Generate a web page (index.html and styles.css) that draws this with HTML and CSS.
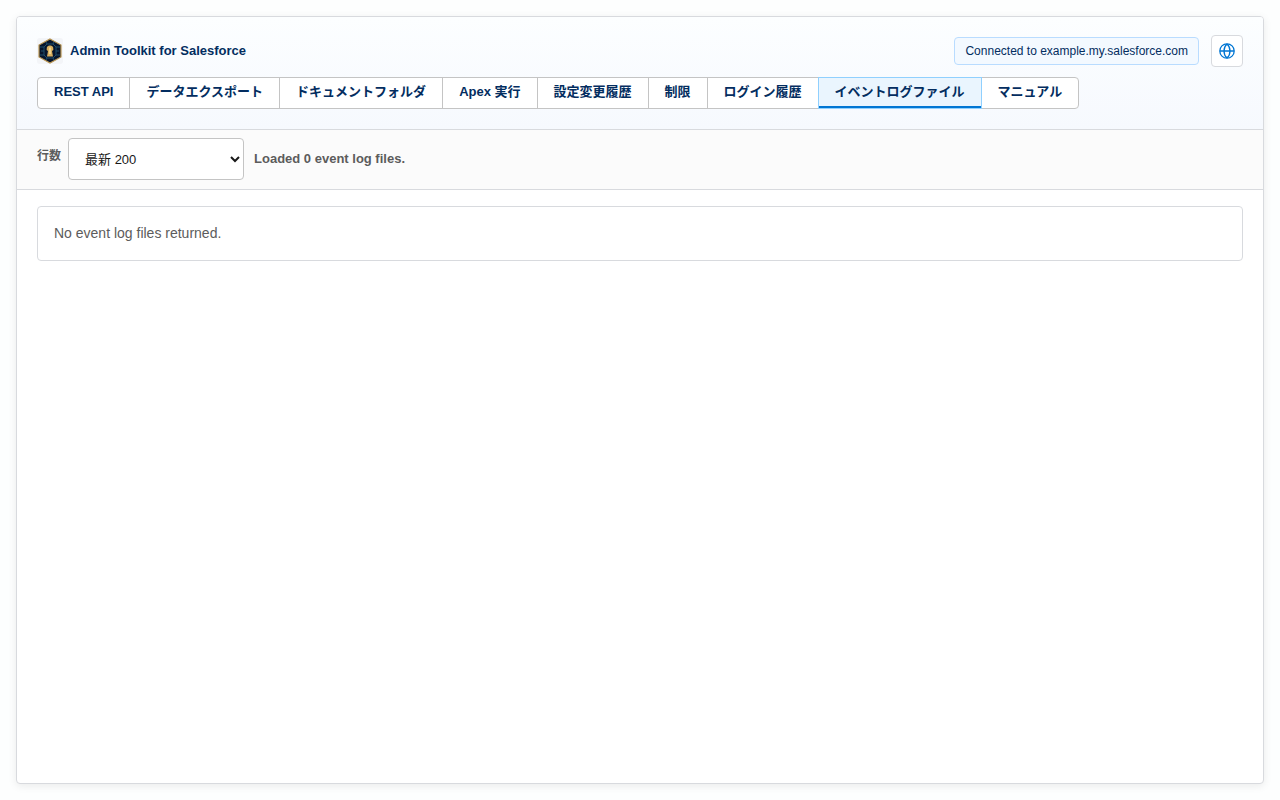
FILE: index.html
```html
<!DOCTYPE html>
<html lang="ja">
<head>
  <meta charset="UTF-8">
  <meta name="viewport" content="width=device-width, initial-scale=1.0">
  <title>Admin Toolkit for Salesforce</title>
  <link rel="stylesheet" href="styles.css">
</head>
<body>
  <div class="app">
    <!-- Header -->
    <header class="header">
      <div class="header-top">
        <div class="brand">
          <svg class="logo" viewBox="0 0 26 26" aria-hidden="true">
            <rect width="26" height="26" rx="3" fill="#f3f5f8"/>
            <path d="M13 1L24 7V19L13 25L2 19V7Z" fill="#07152c" stroke="#b99654" stroke-width="1.2"/>
            <g fill="none" stroke="#235270" stroke-width="0.9">
              <path d="M10 6L7 9V17L10 20H16L19 17V9L16 6Z"/>
              <path d="M9 4L10 6M17 4L16 6M3 9H7M23 9H19M3 17H7M23 17H19M9 22L10 20M17 22L16 20M4 13H7M22 13H19"/>
            </g>
            <path d="M13 7.5A3 3 0 0 0 11 13L10 18.5H16L15 13A3 3 0 0 0 13 7.5Z" fill="#d9b060"/>
            <path d="M13 9.5V16" stroke="#f7dfa0" stroke-width="1.6"/>
          </svg>
          <h1 class="brand-title">Admin Toolkit for Salesforce</h1>
        </div>
        <div class="header-actions">
          <span class="status">Connected to example.my.salesforce.com</span>
          <button class="lang-btn" type="button" aria-label="Language">
            <svg class="globe" viewBox="0 0 16 16" aria-hidden="true">
              <circle cx="8" cy="8" r="7.2"/>
              <path d="M1 8H15M8 1C4 4.5 4 11.5 8 15M8 1C12 4.5 12 11.5 8 15"/>
            </svg>
          </button>
        </div>
      </div>
      <nav class="tabs">
        <button class="tab" type="button">REST API</button>
        <button class="tab" type="button">データエクスポート</button>
        <button class="tab" type="button">ドキュメントフォルダ</button>
        <button class="tab" type="button">Apex 実行</button>
        <button class="tab" type="button">設定変更履歴</button>
        <button class="tab" type="button">制限</button>
        <button class="tab" type="button">ログイン履歴</button>
        <button class="tab active" type="button">イベントログファイル</button>
        <button class="tab" type="button">マニュアル</button>
      </nav>
    </header>

    <!-- Toolbar -->
    <div class="toolbar">
      <label class="toolbar-label" for="limit">行数</label>
      <select class="limit" id="limit">
        <option>最新 200</option>
      </select>
      <span class="message">Loaded 0 event log files.</span>
    </div>

    <!-- Results -->
    <main class="content">
      <div class="empty">No event log files returned.</div>
    </main>
  </div>
</body>
</html>
```
FILE: styles.css
```css
* {
  box-sizing: border-box;
}

body {
  margin: 0;
  min-height: 100vh;
  padding: 16px;
  display: flex;
  font-family: "Liberation Sans", "Noto Sans CJK JP", sans-serif;
  font-size: 14px;
  line-height: 21px;
  color: #181818;
  background: #fdfefe;
}

.app {
  flex: 1;
  min-width: 0;
  background: #fff;
  border: 1px solid #d8dade;
  border-radius: 4px;
  box-shadow: 0 2px 8px rgba(0, 0, 0, 0.08);
  overflow: hidden;
}

/* Header */
.header {
  display: flex;
  flex-direction: column;
  gap: 10px;
  padding: 18px 20px 20px;
  border-bottom: 1px solid #d8dade;
  background: linear-gradient(#fcfeff, #f6f9fe);
}

.header-top,
.brand,
.header-actions {
  display: flex;
  align-items: center;
}

.header-top {
  justify-content: space-between;
}

.brand {
  gap: 7px;
}

.logo {
  width: 26px;
  height: 26px;
}

.brand-title {
  margin: 0;
  font-size: 13px;
  line-height: 18px;
  color: #032d60;
}

.header-actions {
  gap: 12px;
}

.status {
  padding: 4px 10px;
  border: 1px solid #b9dcff;
  border-radius: 4px;
  background: #f3f9ff;
  color: #032d60;
  font-size: 12px;
  line-height: 18px;
}

.lang-btn {
  display: flex;
  align-items: center;
  justify-content: center;
  width: 32px;
  height: 32px;
  padding: 0;
  border: 1px solid #d8dade;
  border-radius: 4px;
  background: #fff;
  cursor: pointer;
}

.globe {
  width: 16px;
  height: 16px;
  fill: none;
  stroke: #0176d3;
  stroke-width: 1.3;
}

/* Tabs */
.tabs {
  display: flex;
}

.tab {
  height: 32px;
  padding: 0 16px 2px;
  border: 1px solid #c4c4c4;
  background: #fff;
  color: #032d60;
  font-family: inherit;
  font-size: 13px;
  font-weight: 700;
  line-height: 20px;
  white-space: nowrap;
  cursor: pointer;
}

.tab + .tab {
  margin-left: -1px;
}

.tab:first-child {
  border-radius: 4px 0 0 4px;
}

.tab:last-child {
  border-radius: 0 4px 4px 0;
}

.tab.active {
  z-index: 1;
  border-color: #90d0fe;
  background: #eaf5fe;
  box-shadow: inset 0 -2px 0 #0176d3;
}

/* Toolbar */
.toolbar {
  display: flex;
  align-items: center;
  padding: 8px 20px 9px;
  border-bottom: 1px solid #d8dade;
  background: #fbfbfb;
  color: #5c5c5c;
}

.toolbar-label {
  padding-bottom: 6px;
  margin-right: 7px;
  font-size: 12px;
  font-weight: 700;
}

.limit {
  width: 176px;
  height: 42px;
  margin-right: 10px;
  padding: 0 0 0 12px;
  border: 1px solid #c4c4c4;
  border-radius: 4px;
  background: #fff;
  color: #181818;
  font-family: inherit;
  font-size: 13px;
}

.message {
  font-size: 13px;
  font-weight: 700;
  line-height: 20px;
}

/* Results */
.content {
  padding: 16px 20px;
}

.empty {
  padding: 16px;
  border: 1px solid #d8dade;
  border-radius: 4px;
  color: #5c5c5c;
}
```
